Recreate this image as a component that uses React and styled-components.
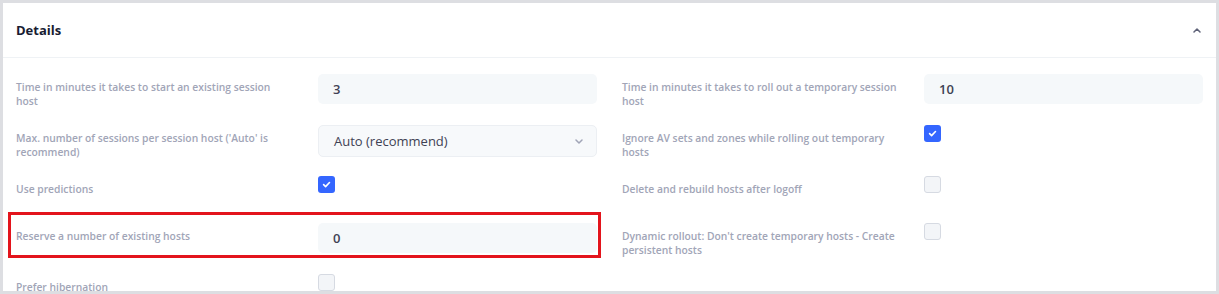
import React from 'react'
import styled, { createGlobalStyle } from 'styled-components'

const GlobalStyle = createGlobalStyle`
  html, body {
    margin: 0;
    padding: 0;
    background: #dddee2;
  }
  body {
    font-family: 'Open Sans', 'Liberation Sans', sans-serif;
  }
`

const Page = styled.div`
  padding: 3px 3px 3px 3px;
  height: 294px;
  box-sizing: border-box;
`

const Card = styled.div`
  background: #fff;
  height: 288px;
  overflow: hidden;
`

const Header = styled.div`
  height: 54px;
  display: flex;
  align-items: center;
  justify-content: space-between;
  padding: 0 15px 0 13px;
  border-bottom: 1px solid #eff2f5;
`

const Title = styled.h3`
  margin: 0;
  font-size: 13px;
  font-weight: 700;
  color: #181c32;
`

const Body = styled.div`
  padding: 16px 13px 0 13px;
  display: grid;
  grid-template-columns: 1fr 1fr;
  column-gap: 25px;
  row-gap: 17px;
`

const Field = styled.div`
  position: relative;
  display: grid;
  grid-template-columns: 1fr 279px;
  align-items: start;

  ${p => p.highlighted && `
    &::after {
      content: '';
      position: absolute;
      left: -8px;
      right: -4px;
      top: -11px;
      bottom: -1px;
      border: 3px solid #e3141c;
      pointer-events: none;
    }
  `}
`

const Label = styled.label`
  padding: 6px 25px 0 0;
  font-size: 10.3px;
  line-height: 14px;
  font-weight: 600;
  color: #a1a5b7;
`

const Input = styled.div`
  height: 30px;
  box-sizing: border-box;
  display: flex;
  align-items: center;
  padding: 0 15px;
  border-radius: 5px;
  background: #f5f8fa;
  font-size: 13px;
  font-weight: 600;
  color: #3f4254;
`

const Select = styled(Input)`
  height: 32px;
  justify-content: space-between;
  border: 1px solid #eceff3;
  background: #f7f9fb;
  font-weight: 500;
  padding-right: 13px;
`

const CheckCell = styled.div`
  height: 30px;
`

const Box = styled.span`
  display: flex;
  align-items: center;
  justify-content: center;
  width: 17px;
  height: 17px;
  box-sizing: border-box;
  border-radius: 3px;
  background: ${p => (p.checked ? '#3466ff' : '#f3f5f8')};
  border: ${p => (p.checked ? 'none' : '1.5px solid #d6dae2')};
`

const Checkbox = ({ checked }) => (
  <CheckCell>
    <Box checked={checked}>
      {checked && (
        <svg width="9" height="9" viewBox="0 0 10 10">
          <path d="M1.8 5.2 L4 7.3 L8.3 2.8" fill="none" stroke="#fff" strokeWidth="1.8" strokeLinecap="round" strokeLinejoin="round" />
        </svg>
      )}
    </Box>
  </CheckCell>
)

const Chevron = ({ up, color = '#5e6278' }) => (
  <svg width="8" height="5" viewBox="0 0 8 5">
    <path
      d={up ? 'M1 4 L4 1 L7 4' : 'M1 1 L4 4 L7 1'}
      fill="none"
      stroke={color}
      strokeWidth="1.5"
      strokeLinecap="round"
      strokeLinejoin="round"
    />
  </svg>
)

export default function App() {
  return (
    <Page>
      <GlobalStyle />
      <Card>
        <Header>
          <Title>Details</Title>
          <Chevron up />
        </Header>
        <Body>
          <Field>
            <Label>Time in minutes it takes to start an existing session host</Label>
            <Input>3</Input>
          </Field>
          <Field>
            <Label>Time in minutes it takes to roll out a temporary session host</Label>
            <Input>10</Input>
          </Field>

          <Field>
            <Label>Max. number of sessions per session host ('Auto' is recommend)</Label>
            <Select>
              Auto (recommend)
              <Chevron color="#a1a5b7" />
            </Select>
          </Field>
          <Field>
            <Label>Ignore AV sets and zones while rolling out temporary hosts</Label>
            <Checkbox checked />
          </Field>

          <Field>
            <Label>Use predictions</Label>
            <Checkbox checked />
          </Field>
          <Field>
            <Label>Delete and rebuild hosts after logoff</Label>
            <Checkbox />
          </Field>

          <Field highlighted>
            <Label>Reserve a number of existing hosts</Label>
            <Input>0</Input>
          </Field>
          <Field>
            <Label>Dynamic rollout: Don't create temporary hosts - Create persistent hosts</Label>
            <Checkbox />
          </Field>

          <Field>
            <Label>Prefer hibernation</Label>
            <Checkbox />
          </Field>
        </Body>
      </Card>
    </Page>
  )
}
